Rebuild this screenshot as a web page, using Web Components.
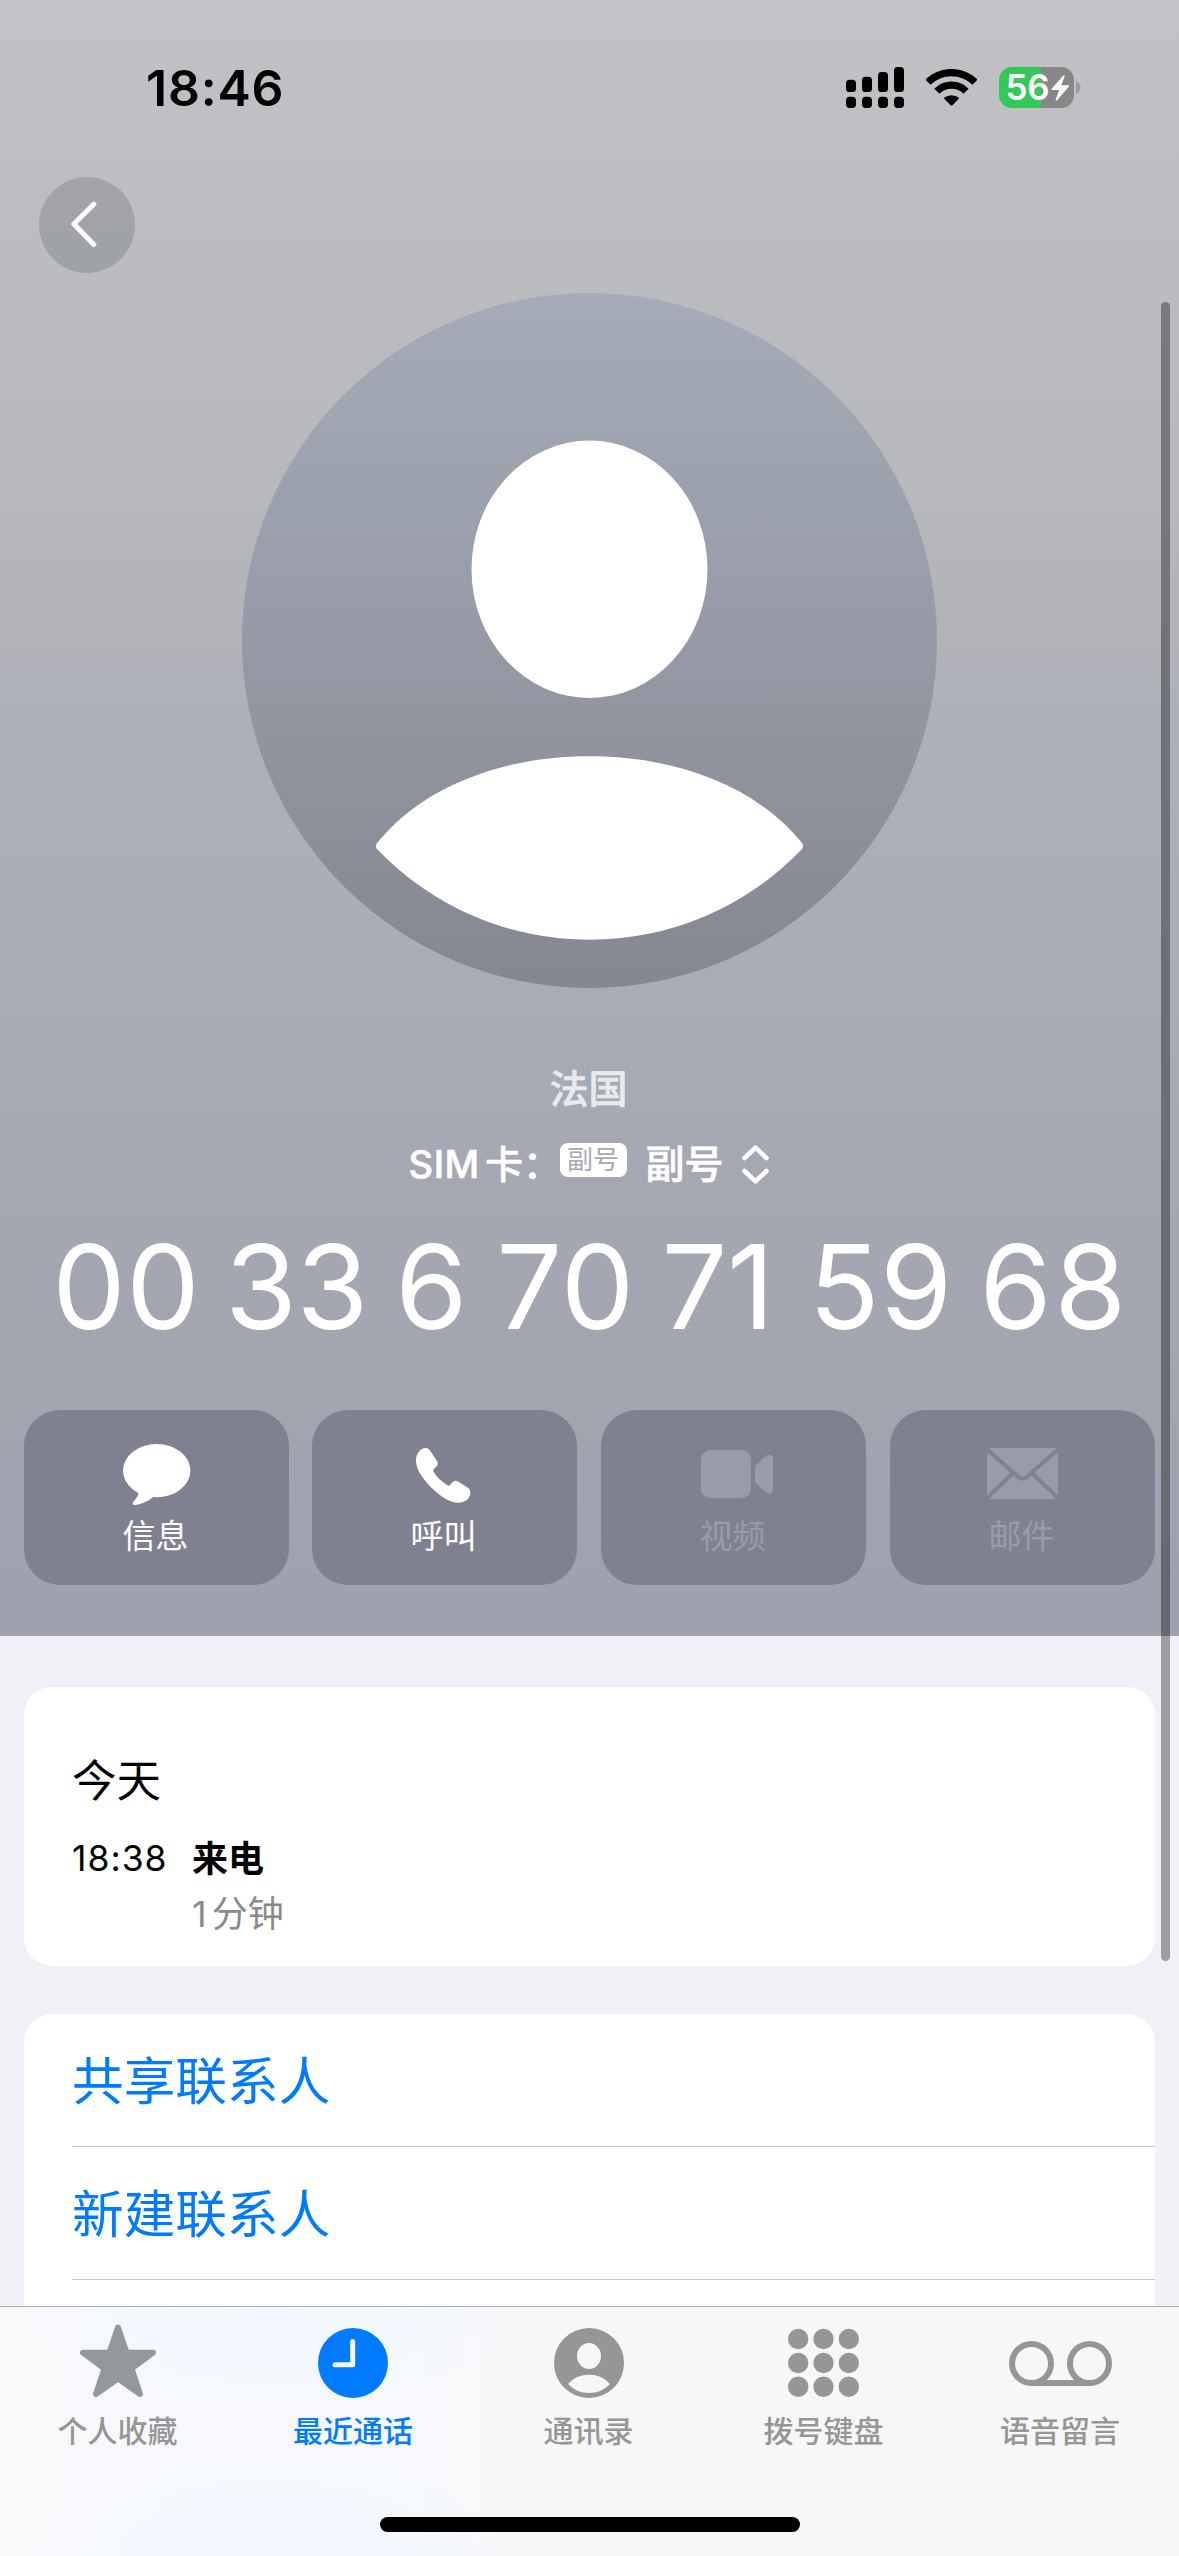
<!DOCTYPE html>
<html lang="zh-CN">
<head>
<meta charset="utf-8">
<title>通话详情</title>
<style>
html,body{margin:0;padding:0}
body{width:1179px;height:2556px;overflow:hidden;background:#f1f0f6;font-family:Inter,"Noto Sans CJK SC",sans-serif}
</style>
</head>
<body>
<call-detail-page></call-detail-page>
<script>
const define = (name, html) => customElements.define(name, class extends HTMLElement {
  constructor() {
    super();
    const t = document.createElement('template');
    t.innerHTML = html;
    this.attachShadow({ mode: 'open' }).appendChild(t.content.cloneNode(true));
  }
});

define('status-bar', `
<style>
:host{display:flex;align-items:center;justify-content:space-between;height:176px;width:100%;box-sizing:border-box;padding:0 98px 0 146px;color:#000}
.time{font-size:50px;font-weight:600;line-height:60px;letter-spacing:.8px}
.right{display:flex;align-items:center;margin-top:-1px}
.wifi{margin:0 22px 0 22px}
.battery{display:flex;align-items:center}
.cell{width:75px;height:41px;border-radius:13px;background:linear-gradient(90deg,#34c759 0 42px,#868789 42px);display:flex;align-items:center;color:#fff;box-sizing:border-box;padding-left:6.5px}
.cell span{font-size:35px;font-weight:600;line-height:41px;letter-spacing:-.3px;width:45.5px}
.tip{margin-left:2px}
svg{display:block}
</style>
<div class="time">18:46</div>
<div class="right">
<svg width="58" height="41" viewBox="0 0 58 41"><g fill="#000"><rect x="0" y="12.7" width="10" height="12.3" rx="3.6"/><rect x="16" y="9.7" width="10" height="15.3" rx="3.6"/><rect x="32" y="5" width="10" height="20" rx="3.6"/><rect x="48" y="0" width="10" height="25" rx="3.6"/><rect x="0" y="29.7" width="10" height="11.3" rx="3.8"/><rect x="16" y="29.7" width="10" height="11.3" rx="3.8"/><rect x="32" y="29.7" width="10" height="11.3" rx="3.8"/><rect x="48" y="29.7" width="10" height="11.3" rx="3.8"/></g></svg>
<svg class="wifi" width="51" height="37" viewBox="0 0 51 37"><g fill="none" stroke="#000" stroke-width="7.2"><path d="M2 13.2A33.4 33.4 0 0 1 49 13.2"/><path d="M10.9 22.2A20.8 20.8 0 0 1 40.1 22.2"/></g><path d="M18 28.7A12.4 12.4 0 0 1 33 28.7Q33 29.5 32.3 30.2L26.7 36Q25.5 37.2 24.3 36L18.7 30.2Q18 29.5 18 28.7Z"/></svg>
<div class="battery"><div class="cell"><span>56</span><svg width="19" height="26" viewBox="0 0 19 26"><path d="M12.3.5L.8 13.6Q0 15 1.3 15H8.3L4.6 24.6Q4.8 26.4 6.4 25L17.8 11.8Q18.6 10.4 17.2 10.3H10.2L13.7 1.3Q13.6-.3 12.3.5Z" fill="#fff"/></svg></div>
<svg class="tip" width="5" height="13" viewBox="0 0 5 13"><path d="M0 0Q4.5 2 4.5 6.5T0 13Z" fill="#9b9c9e"/></svg></div>
</div>`);

define('back-button', `
<style>
:host{display:flex;align-items:center;align-self:flex-start;width:96px;height:96px;margin-left:39px;border-radius:50%;background:linear-gradient(#a3a4a8,#a1a3a7 50%,#9da2a4)}
svg{margin-left:31px;display:block}
</style>
<svg width="28" height="48" viewBox="0 0 28 48"><path d="M23.8 3.2L3.8 23L23.8 43.4" fill="none" stroke="#fff" stroke-width="5" stroke-linecap="round" stroke-linejoin="round"/></svg>`);

define('contact-avatar', `
<style>:host{display:block;width:695px;height:695px;margin-top:20px}svg{display:block}</style>
<svg width="695" height="695" viewBox="0 0 695 695"><defs><linearGradient id="g" x1="0" y1="0" x2="0" y2="1"><stop offset="0" stop-color="#a5abb8"/><stop offset=".5" stop-color="#959aa6"/><stop offset="1" stop-color="#848790"/></linearGradient></defs>
<circle cx="347.5" cy="347.5" r="347.5" fill="url(#g)"/>
<ellipse cx="347.5" cy="276.3" rx="118" ry="128.7" fill="#fff"/>
<path d="M135 550C182 492 262 463.300 347.5 463.300S513 492 560 550Q562 553 560 556A294 294 0 0 1 135 556Q133 553 135 550Z" fill="#fff"/></svg>`);

define('sim-picker', `
<style>
:host{display:flex;align-items:center;height:50px;margin-top:25px;margin-left:-2px;color:#fff;font-size:38px;font-weight:500;line-height:50px;white-space:nowrap;-webkit-text-stroke:.6px currentColor}
.k{width:151px}
.badge{width:67px;height:34px;border-radius:8px;background:#fff;color:#a6a9b4;font-size:26px;font-weight:400;line-height:34px;text-align:center;margin-top:-8px;-webkit-text-stroke:0}
.v{margin-left:19px;width:78px;font-size:39px}
svg{display:block;margin-left:18px}
.k b{font-weight:500;letter-spacing:.6px;margin-right:5px}
</style>
<span class="k"><b>SIM</b>卡：</span><span class="badge">副号</span><span class="v">副号</span>
<svg width="27" height="39" viewBox="0 0 27 39"><g fill="none" stroke="#fff" stroke-width="4.6" stroke-linecap="round" stroke-linejoin="round"><path d="M2.5 13L13.5 2.6L24.5 13"/><path d="M2.5 26L13.5 36.4L24.5 26"/></g></svg>`);

define('action-button', `
<style>
:host{display:flex;flex-direction:column;align-items:center;width:265px;height:175px;border-radius:36px;background:#7f8190;color:#fff;box-sizing:border-box;padding-top:34px}
:host([disabled]){color:#989ba8}
.icon{height:61px;display:flex;align-items:flex-start;justify-content:center}
.label{font-size:33px;line-height:40px;margin-top:11px;margin-left:-2px;font-weight:400}
</style>
<div class="icon"><slot name="icon"></slot></div><div class="label"><slot></slot></div>`);

define('contact-hero', `
<style>
:host{display:flex;flex-direction:column;align-items:center;width:1179px;height:1636px;flex:none;background:linear-gradient(#c1c2c6 0,#bbbcbf 280px,#b8b9bc 480px,#b3b4b8 600px,#aeb0b9 720px,#acaeb8 850px,#a9abb7 980px,#a5a8b3 1200px,#a2a4b0 1400px,#9ea1ae 1636px)}
.place{color:#e8eaeb;font-size:39px;font-weight:500;line-height:50px;margin:76px 0 0 -2px;-webkit-text-stroke:.6px currentColor}
.number{color:#fff;font-size:116.5px;font-weight:400;line-height:120px;margin-top:38px;white-space:nowrap;letter-spacing:.5px;word-spacing:-5px}
.actions{display:grid;grid-template-columns:288px 289px 289px 265px;width:1131px;margin-top:63px}
svg{display:block}
</style>
<status-bar></status-bar>
<back-button style="margin-top:1px"></back-button>
<contact-avatar></contact-avatar>
<div class="place">法国</div>
<sim-picker></sim-picker>
<div class="number"><span style="margin-right:-3.500px">00</span> <span style="letter-spacing:-.5px;margin-right:-1px">33</span> 6 <span style="margin-right:-1.500px">70</span> <span style="letter-spacing:-.5px;margin-right:6.500px">71</span> <span style="margin-right:-1.500px">59</span> <span style="letter-spacing:2.500px;margin-right:-2px">68</span></div>
<div class="actions">
<action-button><svg slot="icon" width="68" height="62" viewBox="0 0 68 62" fill="#fff"><ellipse cx="33.7" cy="26.6" rx="33.7" ry="26.6"/><path d="M15 46C17 51 12.500 55 10.2 58C9 60 10 61.500 12.500 61C19 60.300 25.500 56.500 30.500 53L34 46Z"/></svg>信息</action-button>
<action-button><svg slot="icon" style="margin:3.500px 3px 0 0" width="55" height="55" viewBox="0 0 55 55" fill="#fff"><path d="M0 12.500C0 5 5 0 9.500 0C12 0 13.500 1.500 15 4L21 13C22.300 15 22 16.500 20.500 18.500L17.800 21C17 22 17.200 23 18 24.500C21 29.500 26 34 31.500 37.300C32.500 38 33.300 37.800 34 37L36.500 34.200C38.300 32.300 40 32.200 42 33.500L51.500 39.500C54 41.200 54.500 43 54.300 45.500C53.800 51 49 54.700 42 54.700C32 54.700 20 45 11.500 35.500C4.500 27.500 0 20 0 12.500Z"/></svg>呼叫</action-button>
<action-button disabled><svg slot="icon" style="margin:6px 0 0 7px" width="72" height="48" viewBox="0 0 72 48" fill="#989ba8"><rect width="50" height="48" rx="9"/><path d="M54 18Q54 16 55.500 14.500L65 5.800Q66.500 4.700 68.500 4.700Q72 4.700 72 8.500V40Q72 43.700 68.500 43.700Q66.500 43.700 65 42.300L55.500 33.800Q54 32.500 54 31Z"/></svg>视频</action-button>
<action-button disabled><svg slot="icon" style="margin-top:4px" width="71" height="51" viewBox="0 0 71 51"><rect width="71" height="51" rx="4" fill="#989ba8"/><g fill="none" stroke="#7f8190" stroke-width="4"><path d="M0 1.500L31 28.700Q35.500 32.500 40 28.700L71 1.500"/><path d="M0 50L26 25M71 50L45 25"/></g></svg>邮件</action-button>
</div>`);

define('call-log-card', `
<style>
:host{display:block;height:279px;margin:51px 24px 0;background:#fff;border-radius:28px;box-sizing:border-box;padding:69px 48px 0;color:#000}
.day{font-size:44.5px;line-height:50px;font-weight:400}
.row{display:grid;grid-template-columns:120px 1fr;font-size:35.500px;line-height:54px;margin-top:26px}
.time{letter-spacing:1px}
.type{font-weight:700;font-size:36px}
.dur{grid-column:2;color:#8a8a8c;font-weight:400;font-size:36px;margin-top:1px}
.dur span{margin-left:5px}
</style>
<div class="day">今天</div>
<div class="row"><span class="time">18:38</span><span class="type">来电</span><span class="dur">1<span>分钟</span></span></div>`);

define('link-row', `
<style>
:host{display:block;height:133px;padding-left:48px;color:#007aff}
div{height:133px;box-sizing:border-box;border-bottom:1px solid #c4c4c6;font-size:51.700px;line-height:134px;font-weight:400}
</style><div><slot></slot></div>`);

define('link-card', `
<style>:host{display:block;margin:48px 24px 0;background:#fff;border-radius:28px;height:420px}</style><slot></slot>`);

define('scroll-thumb', `
<style>:host{display:block;position:absolute;left:1161px;top:302px;width:9px;height:1659px;border-radius:5px;background:rgba(0,0,0,.35)}</style>`);

define('tab-item', `
<style>
:host{display:flex;flex-direction:column;align-items:center;color:#969696}
:host([active]){color:#007aff}
.icon{height:80px;display:flex;align-items:center;justify-content:center;padding-top:32px;box-sizing:border-box}
.label{font-size:30px;line-height:40px;font-weight:500;margin-top:24px;white-space:nowrap}
</style>
<div class="icon"><slot name="icon"></slot></div><div class="label"><slot></slot></div>`);

define('tab-bar', `
<style>
:host{display:flex;flex-direction:column;align-items:center;height:250px;width:1179px;box-sizing:border-box;border-top:1px solid #adadaf;background:radial-gradient(ellipse 270px 110px at 270px 0,#f1f7ff,#f1f7ff00),radial-gradient(ellipse 260px 110px at 270px 250px,#f1f7ff,#f1f7ff00),linear-gradient(90deg,#f8f8fa,#f6f8fc 200px,#f6f8fb 400px,#f7f7f8 540px,#f7f7f7)}
.tabs{display:grid;grid-template-columns:235px 236px 235px 235px 238px;height:210px;width:100%}
.home{width:420px;height:15px;border-radius:8px;background:#000}
svg{display:block}
</style>
<div class="tabs">
<tab-item><svg slot="icon" style="margin:-4px 0 0 1px" width="76" height="74" viewBox="0 0 76 74"><path d="M38 3.500L46.600 28.700H73L51.500 44.600L60 70L38 54.600L16 70L24.500 44.600L3 28.700H29.400Z" fill="#93989c" stroke="#93989c" stroke-width="6" stroke-linejoin="round"/></svg>个人收藏</tab-item>
<tab-item active><svg slot="icon" width="70" height="70" viewBox="0 0 70 70"><circle cx="35" cy="35" r="35" fill="#007aff"/><path d="M34.700 13.500V36.800H17" fill="none" stroke="#f4f8fe" stroke-width="5" stroke-linecap="round" stroke-linejoin="round"/></svg>最近通话</tab-item>
<tab-item><svg slot="icon" width="70" height="70" viewBox="0 0 70 70"><circle cx="35" cy="35" r="35" fill="#969696"/><g fill="#f7f7f8"><ellipse cx="35" cy="28" rx="12" ry="13"/><path d="M14 56Q22 46.700 35 46.700T56 56Q47.500 65 35 65T14 56Z"/></g></svg>通讯录</tab-item>
<tab-item><svg slot="icon" width="71" height="70" viewBox="0 0 71 70" fill="#969696"><circle cx="10.200" cy="11" r="10.200"/><circle cx="35.500" cy="11" r="10.200"/><circle cx="60.800" cy="11" r="10.200"/><circle cx="10.200" cy="35" r="10.200"/><circle cx="35.500" cy="35" r="10.200"/><circle cx="60.800" cy="35" r="10.200"/><circle cx="10.200" cy="58.800" r="10.200"/><circle cx="35.500" cy="58.800" r="10.200"/><circle cx="60.800" cy="58.800" r="10.200"/></svg>拨号键盘</tab-item>
<tab-item><svg slot="icon" width="103" height="45" viewBox="0 0 103 45" fill="none" stroke="#969696" stroke-width="6"><circle cx="22.500" cy="22.500" r="19.500"/><circle cx="80.500" cy="22.500" r="19.500"/><path d="M22.500 42H80.500"/></svg>语音留言</tab-item>
</div>
<div class="home"></div>`);

define('call-detail-page', `
<style>
:host{display:flex;flex-direction:column;width:1179px;height:2556px;position:relative;background:#f1f0f6}
main{height:2306px;overflow:hidden}
</style>
<main>
<contact-hero></contact-hero>
<call-log-card></call-log-card>
<link-card><link-row>共享联系人</link-row><link-row>新建联系人</link-row></link-card>
</main>
<tab-bar></tab-bar>
<scroll-thumb></scroll-thumb>`);
</script>
</body>
</html>
